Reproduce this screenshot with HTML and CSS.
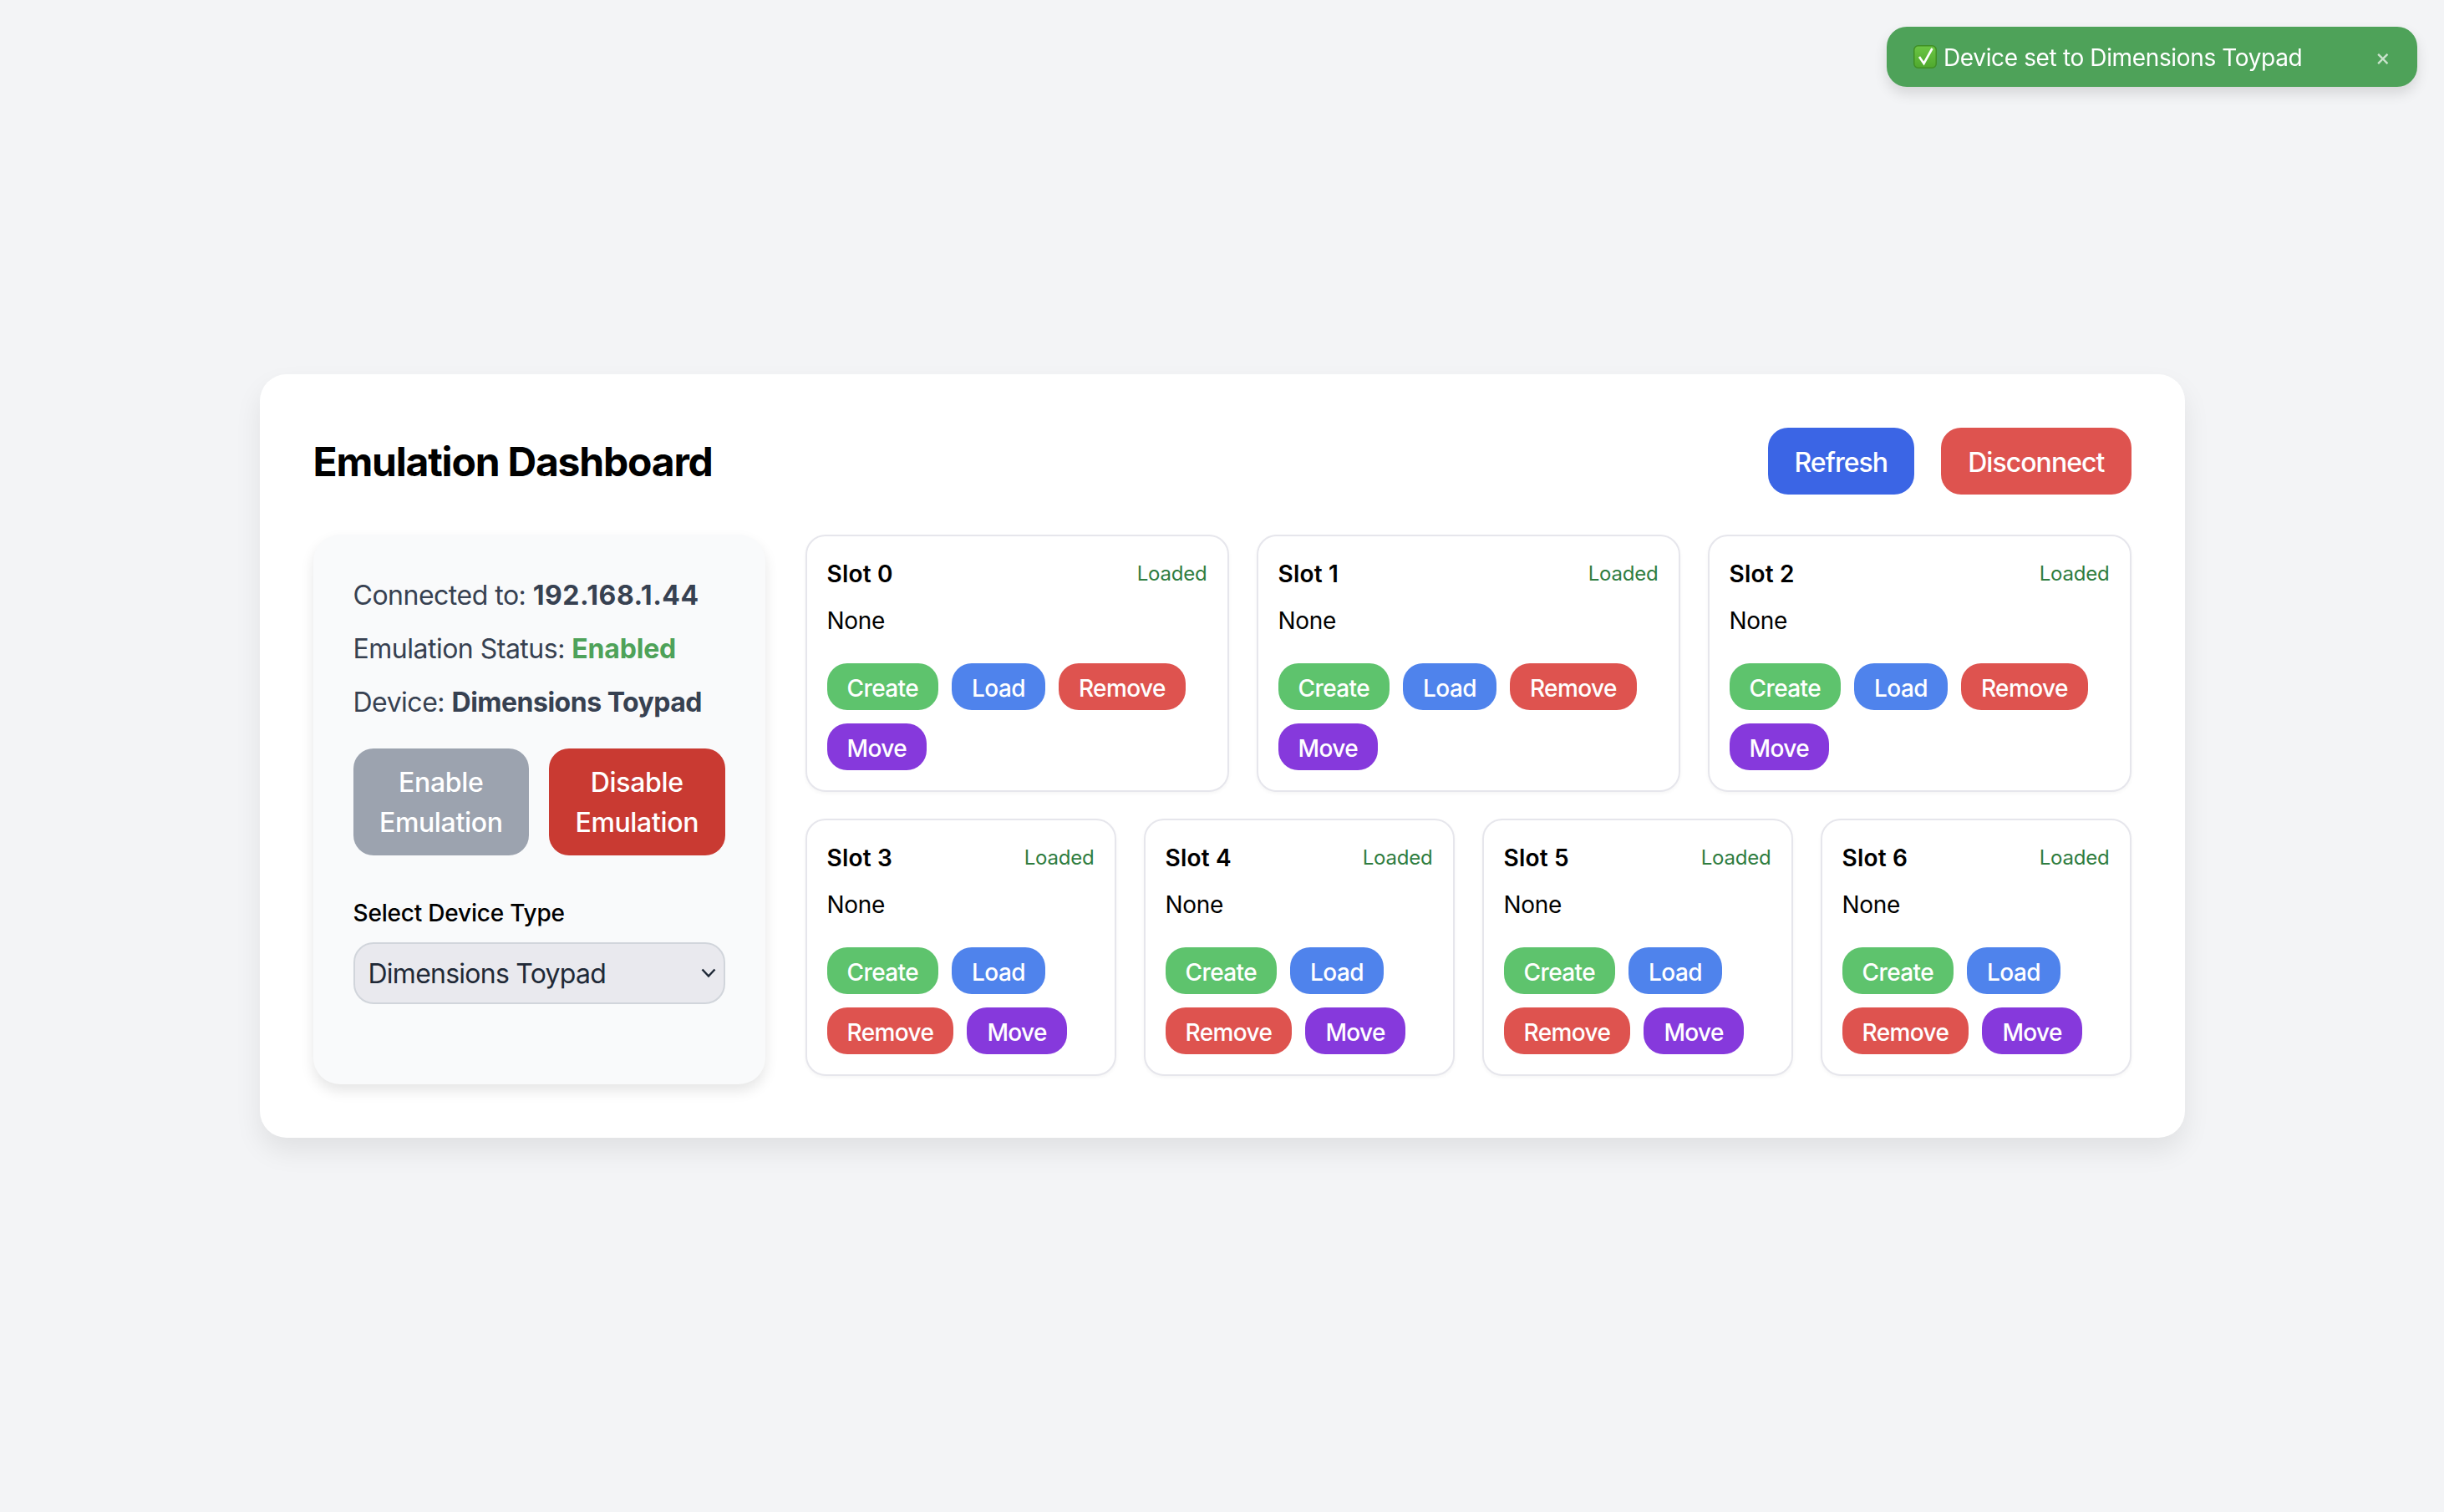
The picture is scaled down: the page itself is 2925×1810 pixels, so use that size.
FILE: index.html
```html
<!DOCTYPE html>
<html>
<head>
    <title>Emulation Dashboard</title>
    <link rel="stylesheet" href="styles.css">
</head>
<body>
<div class="toast">
    <svg class="toast-icon" viewBox="0 0 28 28" width="28" height="28">
        <defs>
            <linearGradient id="tick" x1="0" y1="0" x2="0" y2="1">
                <stop offset="0" stop-color="#6cc644"/>
                <stop offset="1" stop-color="#4fa82e"/>
            </linearGradient>
        </defs>
        <rect x="0.75" y="0.75" width="26.5" height="26.5" rx="5" fill="url(#tick)" stroke="#3f8f25" stroke-width="1.5"/>
        <path d="M7 14 L12.5 22 L22.5 4" fill="none" stroke="#fff" stroke-width="2.6"/>
    </svg>
    <span class="toast-text">Device set to Dimensions Toypad</span>
    <span class="toast-close">×</span>
</div>

<main class="card">
    <header class="top">
        <h1>Emulation Dashboard</h1>
        <div class="top-actions">
            <button class="btn btn-refresh">Refresh</button>
            <button class="btn btn-disconnect">Disconnect</button>
        </div>
    </header>

    <div class="layout">
        <aside class="side">
            <p class="info">Connected to: <strong class="ip">192.168.1.44</strong></p>
            <p class="info">Emulation Status: <strong class="enabled">Enabled</strong></p>
            <p class="info">Device: <strong>Dimensions Toypad</strong></p>
            <div class="side-actions">
                <button class="btn btn-enable">Enable Emulation</button>
                <button class="btn btn-disable">Disable Emulation</button>
            </div>
            <label class="device-label">Select Device Type</label>
            <div class="select-wrap">
                <select class="device-select">
                    <option>Dimensions Toypad</option>
                </select>
                <svg class="chevron" viewBox="0 0 18 12" width="18" height="12">
                    <path d="M1.5 1.5 L9 9.5 L16.5 1.5" fill="none" stroke="#1f2937" stroke-width="2.5"/>
                </svg>
            </div>
        </aside>

        <section class="slots">
            <div class="slot-row">
                <div class="slot">
                    <div class="slot-head"><span class="slot-name">Slot 0</span><span class="slot-state">Loaded</span></div>
                    <p class="slot-tag">None</p>
                    <div class="slot-btns">
                        <button class="pill pill-create">Create</button>
                        <button class="pill pill-load">Load</button>
                        <button class="pill pill-remove">Remove</button>
                        <button class="pill pill-move">Move</button>
                    </div>
                </div>
                <div class="slot">
                    <div class="slot-head"><span class="slot-name">Slot 1</span><span class="slot-state">Loaded</span></div>
                    <p class="slot-tag">None</p>
                    <div class="slot-btns">
                        <button class="pill pill-create">Create</button>
                        <button class="pill pill-load">Load</button>
                        <button class="pill pill-remove">Remove</button>
                        <button class="pill pill-move">Move</button>
                    </div>
                </div>
                <div class="slot">
                    <div class="slot-head"><span class="slot-name">Slot 2</span><span class="slot-state">Loaded</span></div>
                    <p class="slot-tag">None</p>
                    <div class="slot-btns">
                        <button class="pill pill-create">Create</button>
                        <button class="pill pill-load">Load</button>
                        <button class="pill pill-remove">Remove</button>
                        <button class="pill pill-move">Move</button>
                    </div>
                </div>
            </div>
            <div class="slot-row">
                <div class="slot">
                    <div class="slot-head"><span class="slot-name">Slot 3</span><span class="slot-state">Loaded</span></div>
                    <p class="slot-tag">None</p>
                    <div class="slot-btns">
                        <button class="pill pill-create">Create</button>
                        <button class="pill pill-load">Load</button>
                        <button class="pill pill-remove">Remove</button>
                        <button class="pill pill-move">Move</button>
                    </div>
                </div>
                <div class="slot">
                    <div class="slot-head"><span class="slot-name">Slot 4</span><span class="slot-state">Loaded</span></div>
                    <p class="slot-tag">None</p>
                    <div class="slot-btns">
                        <button class="pill pill-create">Create</button>
                        <button class="pill pill-load">Load</button>
                        <button class="pill pill-remove">Remove</button>
                        <button class="pill pill-move">Move</button>
                    </div>
                </div>
                <div class="slot">
                    <div class="slot-head"><span class="slot-name">Slot 5</span><span class="slot-state">Loaded</span></div>
                    <p class="slot-tag">None</p>
                    <div class="slot-btns">
                        <button class="pill pill-create">Create</button>
                        <button class="pill pill-load">Load</button>
                        <button class="pill pill-remove">Remove</button>
                        <button class="pill pill-move">Move</button>
                    </div>
                </div>
                <div class="slot">
                    <div class="slot-head"><span class="slot-name">Slot 6</span><span class="slot-state">Loaded</span></div>
                    <p class="slot-tag">None</p>
                    <div class="slot-btns">
                        <button class="pill pill-create">Create</button>
                        <button class="pill pill-load">Load</button>
                        <button class="pill pill-remove">Remove</button>
                        <button class="pill pill-move">Move</button>
                    </div>
                </div>
            </div>
        </section>
    </div>
</main>
</body>
</html>
```

FILE: styles.css
```css
* {
    box-sizing: border-box;
}

html, body {
    height: 100%;
}

body {
    margin: 0;
    display: flex;
    align-items: center;
    justify-content: center;
    background-color: #f3f4f6;
    font-family: Inter, "Liberation Sans", sans-serif;
    color: #000;
}

button, select {
    font-family: inherit;
    border: none;
}

/* toast */
.toast {
    position: fixed;
    top: 32px;
    right: 32px;
    width: 635px;
    height: 72px;
    padding: 0 32px;
    display: flex;
    align-items: center;
    background-color: #4ea259;
    border-radius: 24px;
    color: #fff;
    font-size: 28px;
    box-shadow: 0 8px 16px rgba(0, 0, 0, 0.12);
}

.toast-icon {
    flex: none;
    margin-right: 8px;
}

.toast-text {
    flex: 1;
    padding-top: 2px;
    letter-spacing: -0.36px;
}

.toast-close {
    font-size: 28px;
    line-height: 28px;
    opacity: 0.7;
}

/* main card */
.card {
    width: 2304px;
    padding: 64px;
    background-color: #fff;
    border-radius: 32px;
    box-shadow: 0 16px 32px rgba(0, 0, 0, 0.08);
}

.top {
    display: flex;
    align-items: center;
    justify-content: space-between;
    margin-bottom: 48px;
}

h1 {
    margin: 0;
    padding-top: 2px;
    font-size: 48px;
    line-height: 64px;
    font-weight: 700;
    letter-spacing: -1.2px;
}

.top-actions {
    display: flex;
    gap: 32px;
}

.btn {
    padding: 18px 32px 14px;
    font-size: 32px;
    line-height: 48px;
    font-weight: 500;
    letter-spacing: -0.95px;
    color: #fff;
    border-radius: 24px;
}

.btn-refresh { background-color: #3b65e5; }
.btn-disconnect { background-color: #de534f; }

.btn-enable, .btn-disable {
    flex: 1 1 0;
    padding: 17px 24px 15px;
    letter-spacing: -0.35px;
}

.btn-enable { background-color: #9ca3af; }
.btn-disable { background-color: #c93a32; }

.layout {
    display: grid;
    grid-template-columns: 541px 1fr;
    gap: 48px;
    align-items: start;
}

/* left column */
.side {
    padding: 48px 48px 96px;
    background-color: #f9fafb;
    border-radius: 32px;
    box-shadow: 0 8px 16px rgba(0, 0, 0, 0.1);
}

.info {
    margin: 0 0 15px;
    padding-top: 1px;
    font-size: 32px;
    line-height: 48px;
    letter-spacing: -0.5px;
    color: #374151;
}

.info strong {
    font-weight: 700;
}

.info .ip {
    letter-spacing: 0.5px;
}

.info .enabled {
    letter-spacing: -0.2px;
    color: #4ea259;
}

.side-actions {
    display: flex;
    gap: 24px;
    margin-top: 31px;
    margin-bottom: 48px;
}

.device-label {
    display: block;
    margin-bottom: 15px;
    padding-top: 1px;
    font-size: 28px;
    line-height: 40px;
    font-weight: 500;
    letter-spacing: -0.2px;
}

.select-wrap {
    position: relative;
}

.device-select {
    display: block;
    width: 100%;
    height: 74px;
    padding: 0 16px;
    appearance: none;
    background-color: #e9e9ee;
    border: 2px solid #d1d5db;
    border-radius: 24px;
    font-size: 32px;
    letter-spacing: -0.75px;
    color: #1f2937;
}

.chevron {
    position: absolute;
    top: 31px;
    right: 11px;
}

/* slots */
.slots {
    display: flex;
    flex-direction: column;
    gap: 32px;
}

.slot-row {
    display: flex;
    gap: 33px;
}

.slot {
    flex: 1 1 0;
    min-width: 0;
    padding: 24px;
    background-color: #fff;
    border: 2px solid #e6e6ec;
    border-radius: 24px;
    box-shadow: 0 2px 4px rgba(0, 0, 0, 0.04);
}

.slot-head {
    display: flex;
    align-items: center;
    justify-content: space-between;
    padding-top: 1px;
}

.slot-name {
    font-size: 28px;
    line-height: 40px;
    font-weight: 600;
    letter-spacing: 0.2px;
}

.slot-state {
    font-size: 24px;
    line-height: 32px;
    letter-spacing: -0.2px;
    color: #2f7d3f;
}

.slot-tag {
    margin: 15px 0 31px;
    padding-top: 1px;
    font-size: 28px;
    line-height: 40px;
    letter-spacing: -0.3px;
}

.slot-btns {
    display: flex;
    flex-wrap: wrap;
    gap: 16px;
}

.pill {
    padding: 10px 24px 6px;
    font-size: 28px;
    line-height: 40px;
    font-weight: 500;
    letter-spacing: -0.6px;
    color: #fff;
    border-radius: 24px;
}

.pill-create { background-color: #5ec36d; }
.pill-load { background-color: #4f83ec; }
.pill-remove { background-color: #de534f; }
.pill-move { background-color: #8639dc; }
```
